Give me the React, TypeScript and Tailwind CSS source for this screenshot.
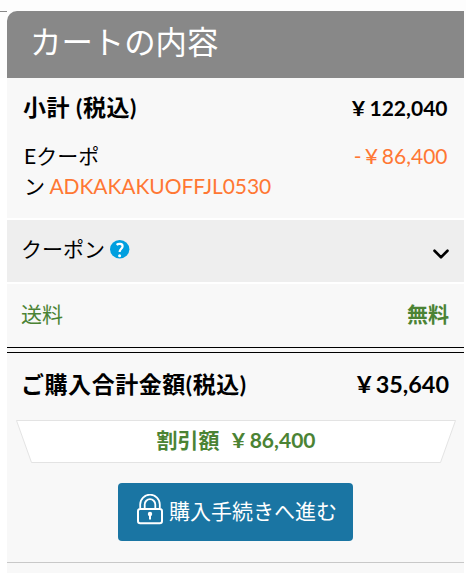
import { ChevronDown } from "lucide-react";

function Row({
  children,
  className,
}: {
  children: React.ReactNode;
  className?: string;
}) {
  return (
    <div className={`flex justify-between whitespace-nowrap ${className}`}>
      {children}
    </div>
  );
}

function Price({ amount, sign }: { amount: string; sign?: string }) {
  return (
    <span>
      {sign && <span className="mr-1">{sign}</span>}
      <span className="mr-1 inline-block origin-right scale-x-110">¥</span>
      {amount}
    </span>
  );
}

function HelpIcon() {
  return (
    <svg width="20" height="19" viewBox="0 0 20 19" aria-hidden="true">
      <ellipse cx="9.7" cy="9.3" rx="9.7" ry="9.2" fill="#009fdf" />
      <path
        d="M6.6 4.9C8.3 3.5 12.6 3.3 12.6 6.3C12.6 8.8 9.6 8.8 9.6 12"
        fill="none"
        stroke="#fff"
        strokeWidth="2.2"
      />
      <circle cx="9.6" cy="15.8" r="1.5" fill="#fff" />
    </svg>
  );
}

function LockIcon() {
  return (
    <svg
      width="26"
      height="31"
      viewBox="0 0 26 31"
      fill="none"
      stroke="#fff"
      aria-hidden="true"
    >
      <rect x="1" y="15" width="24" height="14.2" rx="2.2" strokeWidth="2" />
      <path d="M3.2 14.5V10.5a9.8 9.8 0 0 1 19.6 0V14.5" strokeWidth="1.8" />
      <path d="M7.7 14.5V10.5a5.3 5.3 0 0 1 10.6 0V14.5" strokeWidth="1.8" />
      <circle cx="13" cy="20" r="2.2" fill="#fff" stroke="none" />
      <path d="M13 20v5.5" strokeWidth="2" />
    </svg>
  );
}

function DiscountBanner() {
  return (
    <div className="relative ml-[9px] mt-[13px] flex h-[43px] w-[440px] justify-center">
      <svg className="absolute inset-0" width="440" height="43" aria-hidden="true">
        <path d="M0.5 0.5H439.5L424.5 42.5H15.5Z" fill="#fff" stroke="#e3e3e3" />
      </svg>
      <p className="relative flex gap-3.5 text-[21px] leading-[39px] font-bold text-[#4b8334]">
        <span>割引額</span>
        <Price amount="86,400" />
      </p>
    </div>
  );
}

export default function App() {
  return (
    <div className="flex h-[573px] w-[466px] flex-col overflow-hidden bg-white font-[Lato,'Noto_Sans_CJK_JP',sans-serif] text-[21px] text-black">
      <div className="flex h-[78px] bg-[#fdfdfd]">
        <div className="mt-[11px] h-px w-[7px] bg-[#888]" />
        <h1 className="mt-[11px] h-[67px] w-[457px] rounded-tl-[10px] bg-[#888] pl-[23px] text-[31.4px] leading-[62px] font-normal text-white">
          カートの内容
        </h1>
      </div>
      <div className="ml-[7px] w-[457px]">
        <section className="h-[140px] bg-[#f8f8f8] pr-[16.5px] pl-[17px]">
          <Row className="h-[60px] font-bold leading-[59px]">
            <span className="-ml-px text-[23px] tracking-[0.5px]">小計 (税込)</span>
            <Price amount="122,040" />
          </Row>
          <Row className="pt-[3px] leading-[30px]">
            <p>
              Eクーポ
              <br />ン{" "}
              <span className="-ml-px tracking-[-0.06px] text-[#ff7733]">
                ADKAKAKUOFFJL0530
              </span>
            </p>
            <span className="text-[#ff7733]">
              <Price sign="-" amount="86,400" />
            </span>
          </Row>
        </section>
        <Row className="mt-[2px] h-[62px] bg-[#eee] pr-[15px] pl-[14px] leading-[58px]">
          <div className="flex">
            <span>クーポン</span>
            <span className="mt-5 ml-[5px]">
              <HelpIcon />
            </span>
          </div>
          <ChevronDown className="mt-[21px] -mr-[5px]" size={26} strokeWidth={2.4} />
        </Row>
        <Row className="mt-[2px] h-[63px] bg-[#f8f8f8] pr-[15px] pl-[14px] leading-[59px] text-[#4b8334]">
          <span>送料</span>
          <span className="font-bold">無料</span>
        </Row>
        <section className="h-[226px] bg-[#f8f8f8]">
          <div className="h-[6px] border-y border-black" />
          <Row className="h-[54px] pt-[2px] pr-[15px] pl-[14px] text-[23px] leading-[58px] font-bold">
            <span className="tracking-[0.55px]">ご購入合計金額(税込)</span>
            <span className="text-[23.4px]">
              <Price amount="35,640" />
            </span>
          </Row>
          <DiscountBanner />
          <button className="mt-5 ml-[111px] flex h-[58px] w-[235px] rounded-[4px] bg-[#1a75a3] pl-[19px] text-white">
            <span className="mt-[11px] mr-1.5">
              <LockIcon />
            </span>
            <span className="leading-[55px] whitespace-nowrap">購入手続きへ進む</span>
          </button>
          <div className="mt-[21px] h-px bg-[#c8c8c8]" />
        </section>
      </div>
    </div>
  );
}
